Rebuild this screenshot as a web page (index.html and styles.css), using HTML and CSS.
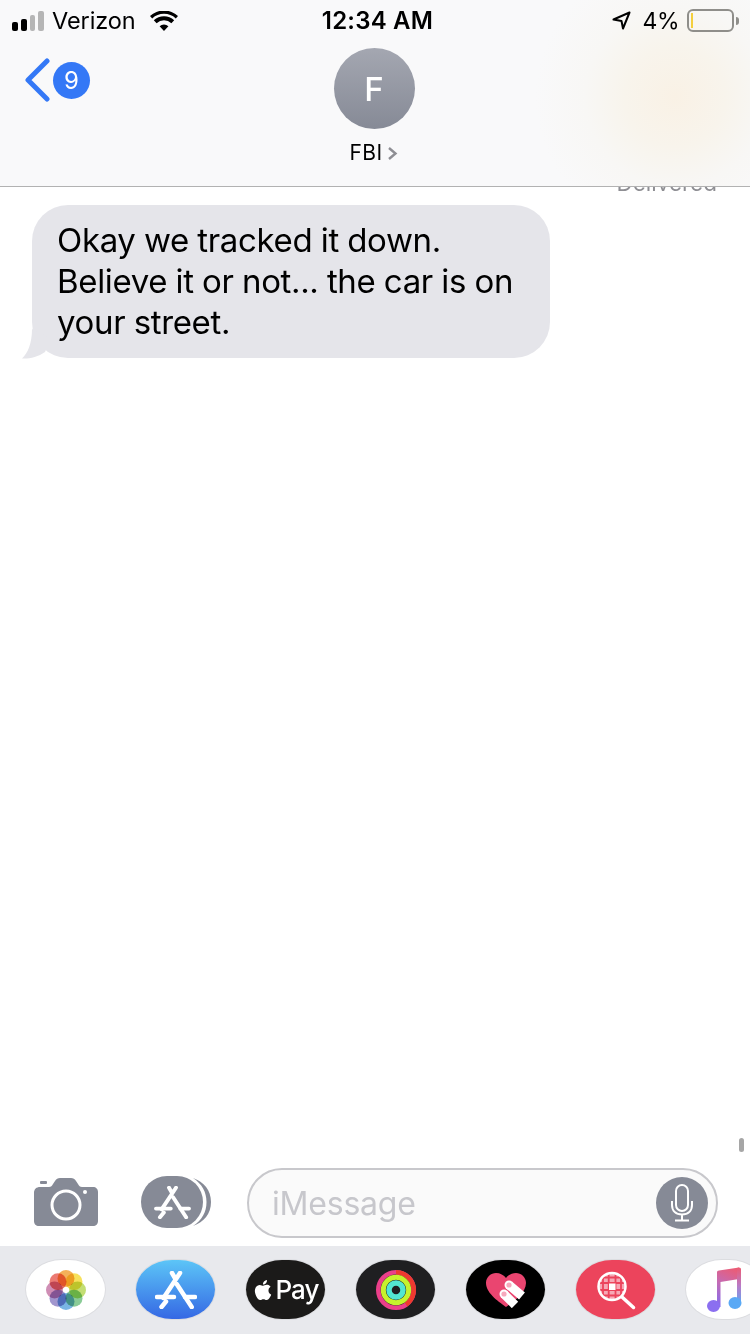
FILE: index.html
```html
<!DOCTYPE html>
<html lang="en">
<head>
<meta charset="utf-8">
<title>Messages</title>
<link rel="stylesheet" href="styles.css">
</head>
<body>
<svg class="defs" width="0" height="0" aria-hidden="true">
  <defs>
    <symbol id="a-store" viewBox="0 0 42 38">
      <path d="M17 2 L20.500 8 M25 2 L8.500 27 M21.700 13 L36.700 36 M11 30.500 L6.500 36" fill="none" stroke="currentColor" stroke-width="4.500" stroke-linecap="round"/>
      <path d="M2 26 H19 M30 26 H40" fill="none" stroke="currentColor" stroke-width="4.500" stroke-linecap="round"/>
    </symbol>
  </defs>
</svg>
<div class="phone">
  <header class="top">
    <div class="status">
      <div class="status-left">
        <span class="signal"><i class="b1"></i><i class="b2"></i><i class="b3"></i><i class="b4"></i></span>
        <span class="carrier">Verizon</span>
        <svg class="wifi" width="28" height="20" viewBox="0 0 28 20"><path d="M14 20 L9.600 15.200 A6.500 6.500 0 0 1 18.400 15.200 Z M6.600 12.200 L3.800 9.200 A15 15 0 0 1 24.200 9.200 L21.400 12.200 A11 11 0 0 0 6.600 12.200 Z M2.200 7.400 L0 5 A20.500 20.500 0 0 1 28 5 L25.800 7.400 A17.400 17.400 0 0 0 2.200 7.400 Z" fill="#000"/></svg>
      </div>
      <div class="time">12:34 AM</div>
      <div class="status-right">
        <svg class="loc" width="19" height="19" viewBox="0 0 19 19"><path d="M17.500 1.500 L1.500 8.500 L9.500 10 L11 17.500 Z" fill="none" stroke="#000" stroke-width="2" stroke-linejoin="round"/></svg>
        <span class="pct">4%</span>
        <span class="battery"><i class="charge"></i></span>
        <span class="nub"></span>
      </div>
    </div>
    <div class="nav">
      <div class="back">
        <svg class="chev" width="26" height="44" viewBox="0 0 26 44"><path d="M23 3 L4 22 L23 41" fill="none" stroke="#3478f6" stroke-width="5" stroke-linecap="round" stroke-linejoin="round"/></svg>
        <span class="badge">9</span>
      </div>
      <div class="contact">
        <div class="avatar">F</div>
        <div class="name">FBI
          <svg class="name-chev" width="11" height="15" viewBox="0 0 11 15"><path d="M2 2 L8.500 7.500 L2 13" fill="none" stroke="#8e8e93" stroke-width="2.400"/></svg>
        </div>
      </div>
    </div>
  </header>

  <main class="thread">
    <div class="delivered">Delivered</div>
    <div class="bubble">
      <svg class="tail" width="30" height="30" viewBox="0 0 30 30"><path d="M11 0 C11 14 7 24 1 29.500 C8 30 17 28 24 23 L30 10 Z" fill="#e5e5ea"/></svg>
      <p class="msg">Okay we tracked it down.<br>Believe it or not... the car is on<br>your street.</p>
    </div>
  </main>

  <span class="scroll"></span>

  <section class="compose">
    <svg class="camera" width="64" height="48" viewBox="0 0 64 48">
      <path d="M6 9 C2.500 9 0 11 0 15 V43 C0 46 2 48 5 48 H59 C62 48 64 46 64 43 V14 C64 11 62 9 59 9 H48 C46 9 45 8 44 6 L42 3 C41 1 39 0 37 0 H26 C24 0 22 1 21 3 L19 6 C18 8 17 9 15 9 Z" fill="#868a96"/>
      <rect x="6" y="3" width="7" height="3" rx="1" fill="#868a96"/>
      <circle cx="32" cy="27" r="14" fill="none" stroke="#fff" stroke-width="3"/>
      <circle cx="51" cy="14" r="2" fill="#fff"/>
    </svg>
    <div class="apps-btn">
      <svg class="apps-edge" width="70" height="52" viewBox="0 0 70 52"><path d="M52 2 C63 6 70 14 70 26 C70 38 63 46 52 50 C61 44 65.500 36 65.500 26 C65.500 16 61 8 52 2 Z" fill="#868a96"/></svg>
      <span class="apps-pill"><svg class="apps-a" width="37" height="33"><use href="#a-store"/></svg></span>
    </div>
    <div class="input">
      <span class="placeholder">iMessage</span>
      <span class="mic">
        <svg width="24" height="38" viewBox="0 0 24 38">
          <rect x="6" y="1" width="12" height="26" rx="6" fill="none" stroke="#fff" stroke-width="2"/>
          <path d="M2 17 V21 C2 27 6 30.500 12 30.500 C18 30.500 22 27 22 21 V17 M12 30.500 V36 M5 36.500 H19" fill="none" stroke="#fff" stroke-width="2"/>
        </svg>
      </span>
    </div>
  </section>

  <footer class="tray">
    <div class="tile t-photos">
      <svg width="44" height="44" viewBox="0 0 44 44">
        <g class="petals">
          <circle class="petal" cx="22" cy="10.500" r="8.500" fill="#f3a33c"/>
          <circle class="petal" cx="30" cy="13.800" r="8.500" fill="#f6dc3f"/>
          <circle class="petal" cx="33.500" cy="22" r="8.500" fill="#b9d85c"/>
          <circle class="petal" cx="30" cy="30.200" r="8.500" fill="#75c283"/>
          <circle class="petal" cx="22" cy="33.500" r="8.500" fill="#62a8e0"/>
          <circle class="petal" cx="14" cy="30.200" r="8.500" fill="#9184c6"/>
          <circle class="petal" cx="10.500" cy="22" r="8.500" fill="#c77aa8"/>
          <circle class="petal" cx="14" cy="13.800" r="8.500" fill="#e8625a"/>
        </g>
        <circle cx="22" cy="22" r="1.500" fill="#fff"/>
      </svg>
    </div>
    <div class="tile t-store"><svg class="store-a" width="42" height="38"><use href="#a-store"/></svg></div>
    <div class="tile t-pay">
      <svg class="apple" width="20" height="22" viewBox="0 0 24 24"><path fill="#fff" d="M12.152 6.896c-.948 0-2.415-1.078-3.960-1.040-2.040.027-3.910 1.183-4.961 3.014-2.117 3.675-.546 9.103 1.519 12.090 1.013 1.454 2.208 3.090 3.792 3.039 1.520-.065 2.090-.987 3.935-.987 1.831 0 2.350.987 3.960.948 1.637-.026 2.676-1.480 3.676-2.948 1.156-1.688 1.636-3.325 1.662-3.415-.039-.013-3.182-1.221-3.220-4.857-.026-3.040 2.480-4.494 2.597-4.559-1.429-2.090-3.623-2.324-4.390-2.376-2-.156-3.675 1.090-4.610 1.090zM15.530 3.830c.843-1.012 1.400-2.427 1.245-3.830-1.207.052-2.662.805-3.532 1.818-.780.896-1.454 2.338-1.273 3.714 1.338.104 2.715-.688 3.559-1.701"/></svg>
      <span class="pay">Pay</span>
    </div>
    <div class="tile t-activity">
      <svg width="42" height="42" viewBox="0 0 42 42">
        <circle cx="21" cy="21" r="17.700" fill="none" stroke="#eb3f8a" stroke-width="4.600"/>
        <path d="M21 3.300 A17.700 17.700 0 0 1 31 35.600" fill="none" stroke="#ee3a2f" stroke-width="4.600"/>
        <circle cx="21" cy="21" r="12.700" fill="none" stroke="#c6f22d" stroke-width="5"/>
        <circle cx="21" cy="21" r="7" fill="none" stroke="#52e6d2" stroke-width="5.500"/>
      </svg>
    </div>
    <div class="tile t-heart">
      <svg width="42" height="36" viewBox="0 0 42 36">
        <path d="M21 35 C16 31 1 22 1 11 C1 5 6 1 11 1 C15 1 19 3 21 6 C23 3 27 1 31 1 C36 1 41 5 41 11 C41 22 26 31 21 35 Z" fill="#ea4570"/>
        <path d="M24 13 L37 24 M19 22 L30 33" fill="none" stroke="#fff" stroke-width="9"/>
        <circle cx="24" cy="13" r="4.500" fill="#fff"/>
        <circle cx="24" cy="13" r="2.600" fill="#f6a9bd"/>
        <circle cx="19" cy="22" r="4.500" fill="#fff"/>
        <circle cx="19" cy="22" r="2.600" fill="#f6a9bd"/>
      </svg>
    </div>
    <div class="tile t-search">
      <svg class="globe" width="40" height="40" viewBox="0 0 40 40">
        <circle cx="16" cy="16.500" r="13" fill="#f6a9b6"/>
        <path d="M3 7.500 H29 M3 13 H29 M3 20 H29 M3 25.500 H29 M7 3 V30 M12.700 3 V30 M19.500 3 V30 M25 3 V30" fill="none" stroke="#ec445c" stroke-width="1.800"/>
        <rect x="13" y="13.500" width="6.500" height="6.500" fill="#fff"/>
        <circle cx="16" cy="16.500" r="13.500" fill="none" stroke="#fff" stroke-width="2.500"/>
        <path d="M26 27 L37.500 37.500" stroke="#fff" stroke-width="3.500" stroke-linecap="round"/>
      </svg>
    </div>
    <div class="tile t-music">
      <svg width="36" height="46" viewBox="0 0 36 46">
        <defs>
          <linearGradient id="note" gradientUnits="userSpaceOnUse" x1="30" y1="0" x2="12" y2="42">
            <stop offset="0" stop-color="#ef5a6f"/>
            <stop offset=".45" stop-color="#c46bb4"/>
            <stop offset="1" stop-color="#7b6cf5"/>
          </linearGradient>
          <linearGradient id="note2" gradientUnits="userSpaceOnUse" x1="33" y1="0" x2="33" y2="38">
            <stop offset="0" stop-color="#ef5a6f"/>
            <stop offset=".5" stop-color="#b87bc8"/>
            <stop offset="1" stop-color="#5aa9f5"/>
          </linearGradient>
        </defs>
        <path d="M11 5 Q11 3.500 13 3.500 L33 0.500 L33 12 L14.500 15 V40 H11 Z" fill="url(#note)"/>
        <path d="M31 12 V36 H35 V2 Q35 0.500 33 0.500 L31 1 Z" fill="url(#note2)"/>
        <ellipse cx="7.500" cy="39" rx="6.500" ry="6" fill="#8b6ff0"/>
        <ellipse cx="29" cy="36" rx="6.500" ry="6" fill="#5aa9f5"/>
      </svg>
    </div>
  </footer>
</div>
</body>
</html>
```

FILE: styles.css
```css
* { box-sizing: border-box; }
html, body { margin: 0; padding: 0; }
body { width: 750px; height: 1334px; overflow: hidden; background: #fff; font-family: Inter, "Liberation Sans", sans-serif; color: #000; }
.defs { position: absolute; }
.phone { position: relative; width: 750px; height: 1334px; display: flex; flex-direction: column; overflow: hidden; }

/* header */
.top { height: 187px; flex: none; border-bottom: 1px solid #b2b2b2; background: radial-gradient(circle at 675px 97px, #f9f1e5 0, #f8f4ec 50px, #f8f7f5 90px, #f9f9fa 140px); position: relative; z-index: 2; }
.status { height: 41px; display: grid; grid-template-columns: 1fr auto 1fr; align-items: center; padding: 0 11px 0 12px; }
.status-left { display: flex; align-items: center; }
.signal { display: flex; align-items: flex-end; gap: 3px; height: 20px; width: 32px; }
.signal i { display: block; width: 6px; border-radius: 2px; background: #000; }
.signal .b1 { height: 9px; }
.signal .b2 { height: 12px; }
.signal .b3 { height: 16px; background: #b5b5b5; }
.signal .b4 { height: 20px; background: #b5b5b5; }
.carrier { font-size: 23.500px; margin-left: 8px; letter-spacing: -0.1px; }
.wifi { margin-left: 14px; }
.time { font-size: 24px; font-weight: 600; letter-spacing: 0.2px; margin-left: 4px; }
.status-right { display: flex; align-items: center; justify-content: flex-end; }
.loc { margin-right: 12px; }
.pct { font-size: 23px; margin-right: 8px; letter-spacing: -0.5px; }
.battery { display: block; width: 47px; height: 23px; border: 2px solid #8f8e8a; border-radius: 6px; padding: 2px; }
.charge { display: block; width: 2px; height: 15px; background: #f4cf3e; }
.nub { display: block; width: 3px; height: 8px; margin-left: 2px; background: #8f8e8a; border-radius: 0 4px 4px 0; }

.nav { display: grid; grid-template-columns: 1fr auto 1fr; padding: 7px 0 0 24px; }
.back { display: flex; align-items: center; gap: 0; height: 44px; margin-top: 10px; }
.chev { flex: none; }
.badge { width: 37px; height: 37px; margin-left: 3px; border-radius: 50%; background: #3478f6; color: #fff; font-size: 24px; display: flex; align-items: center; justify-content: center; }
.contact { display: flex; flex-direction: column; align-items: center; margin-left: -26px; }
.avatar { width: 81px; height: 81px; border-radius: 50%; background: linear-gradient(#a4a7b1, #868a96); color: #fff; font-size: 33px; font-weight: 500; display: flex; align-items: center; justify-content: center; }
.name { font-size: 21px; letter-spacing: 0.4px; margin-top: 12px; display: flex; align-items: center; gap: 5px; line-height: 24px; }

/* thread */
.thread { flex: 1; overflow: hidden; padding: 0 0 0 32px; position: relative; }
.delivered { margin: -17px 33px 0 0; text-align: right; font-size: 22.500px; line-height: 26px; color: #8e8e93; }
.bubble { position: relative; width: 518px; height: 153px; margin-top: 9px; background: #e5e5ea; border-radius: 36px; padding: 15px 0 0 25px; }
.tail { position: absolute; left: -11px; bottom: -0.500px; }
.msg { position: relative; margin: 0; font-size: 33px; line-height: 41px; letter-spacing: -0.35px; word-spacing: -0.5px; }

.scroll { position: absolute; left: 739px; top: 1138px; width: 5px; height: 14px; border-radius: 3px; background: #a6a6a6; }

/* compose */
.compose { flex: none; height: 78px; display: flex; align-items: flex-start; padding: 0 32px 0 34px; }
.camera { flex: none; margin-top: 10px; }
.apps-btn { position: relative; flex: none; width: 70px; height: 52px; margin: 8px 0 0 43px; }
.apps-edge { position: absolute; left: 0; top: 0; }
.apps-pill { position: relative; display: flex; align-items: center; justify-content: center; width: 62px; height: 52px; border-radius: 26px / 26px; background: #868a96; color: #fff; }
.input { flex: 1; height: 70px; margin-left: 36px; border: 2px solid #c8c8cc; border-radius: 35px; background: #fafafa; display: flex; align-items: center; justify-content: space-between; padding: 0 8px 0 23px; }
.placeholder { font-size: 32px; color: #c7c7cc; letter-spacing: -0.2px; }
.mic { width: 52px; height: 52px; border-radius: 50%; background: #868a96; display: flex; align-items: center; justify-content: center; }

/* tray */
.tray { flex: none; height: 88px; background: #e8e9ed; display: flex; gap: 31px; padding: 14px 0 0 26px; overflow: hidden; }
.tile { flex: none; width: 79px; height: 59px; border-radius: 36px / 29.500px; display: flex; align-items: center; justify-content: center; box-shadow: 0 0 0 1px rgba(0,0,0,.05); }
.petal { mix-blend-mode: multiply; opacity: .85; }
.petals { isolation: isolate; }
.t-photos { background: #fff; }
.t-store { background: linear-gradient(#5cc5f7, #3568e4); color: #fff; }
.t-pay { background: #1b1a19; color: #fff; gap: 3px; }
.pay { font-size: 26px; font-weight: 500; letter-spacing: -1px; }
.t-activity { background: #1f1f21; }
.t-heart { background: #000; }
.t-search { background: #ec445c; }
.t-music { background: #fff; justify-content: flex-start; padding-left: 20px; }
```
